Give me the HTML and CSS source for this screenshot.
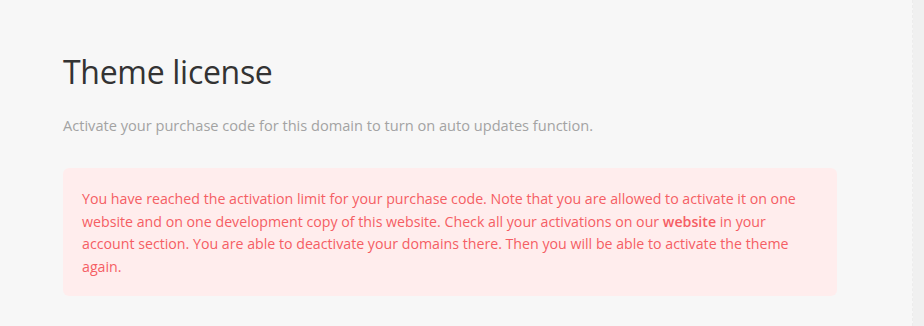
FILE: index.html
```html
<!DOCTYPE html>
<html lang="en">
<head>
<meta charset="utf-8">
<title>Theme license</title>
<link rel="stylesheet" href="styles.css">
</head>
<body>
<div class="layout">
  <main class="content">
    <h1 class="title">Theme license</h1>
    <p class="subtitle">Activate your purchase code for this domain to turn on auto updates function.</p>
    <div class="notice">
      You have reached the activation limit for your purchase code. Note that you are allowed to activate it on one website and on one development copy of this website. Check all your activations on our <a class="notice-link" href="#">website</a> in your account section. You are able to deactivate your domains there. Then you will be able to activate the theme again.
    </div>
  </main>
  <aside class="side"></aside>
</div>
</body>
</html>
```
FILE: styles.css
```css
html, body {
  margin: 0;
  padding: 0;
  height: 100%;
}
body {
  background: #f7f7f7;
  font-family: "Open Sans", "Noto Sans", sans-serif;
  overflow: hidden;
}
.layout {
  display: flex;
  height: 326px;
}
.content {
  flex: 1;
  padding: 46px 75px 0 63px;
  border-right: 1px dashed #ececec;
}
.side {
  width: 11px;
  background: #f0f0f0;
}
.title {
  margin: 0;
  font-size: 32px;
  font-weight: 400;
  color: #333333;
  line-height: 52px;
  letter-spacing: -0.3px;
}
.subtitle {
  margin: 16px 0 0;
  font-size: 14.6px;
  color: #a3a3a3;
  line-height: 22px;
}
.notice {
  margin-top: 32px;
  background: #ffeded;
  border-radius: 6px;
  padding: 20px 28px 18px 19px;
  font-size: 14.2px;
  line-height: 22.5px;
  color: #f55e64;
}
.notice-link {
  color: #f55e64;
  font-weight: 600;
  text-decoration: none;
}
```
